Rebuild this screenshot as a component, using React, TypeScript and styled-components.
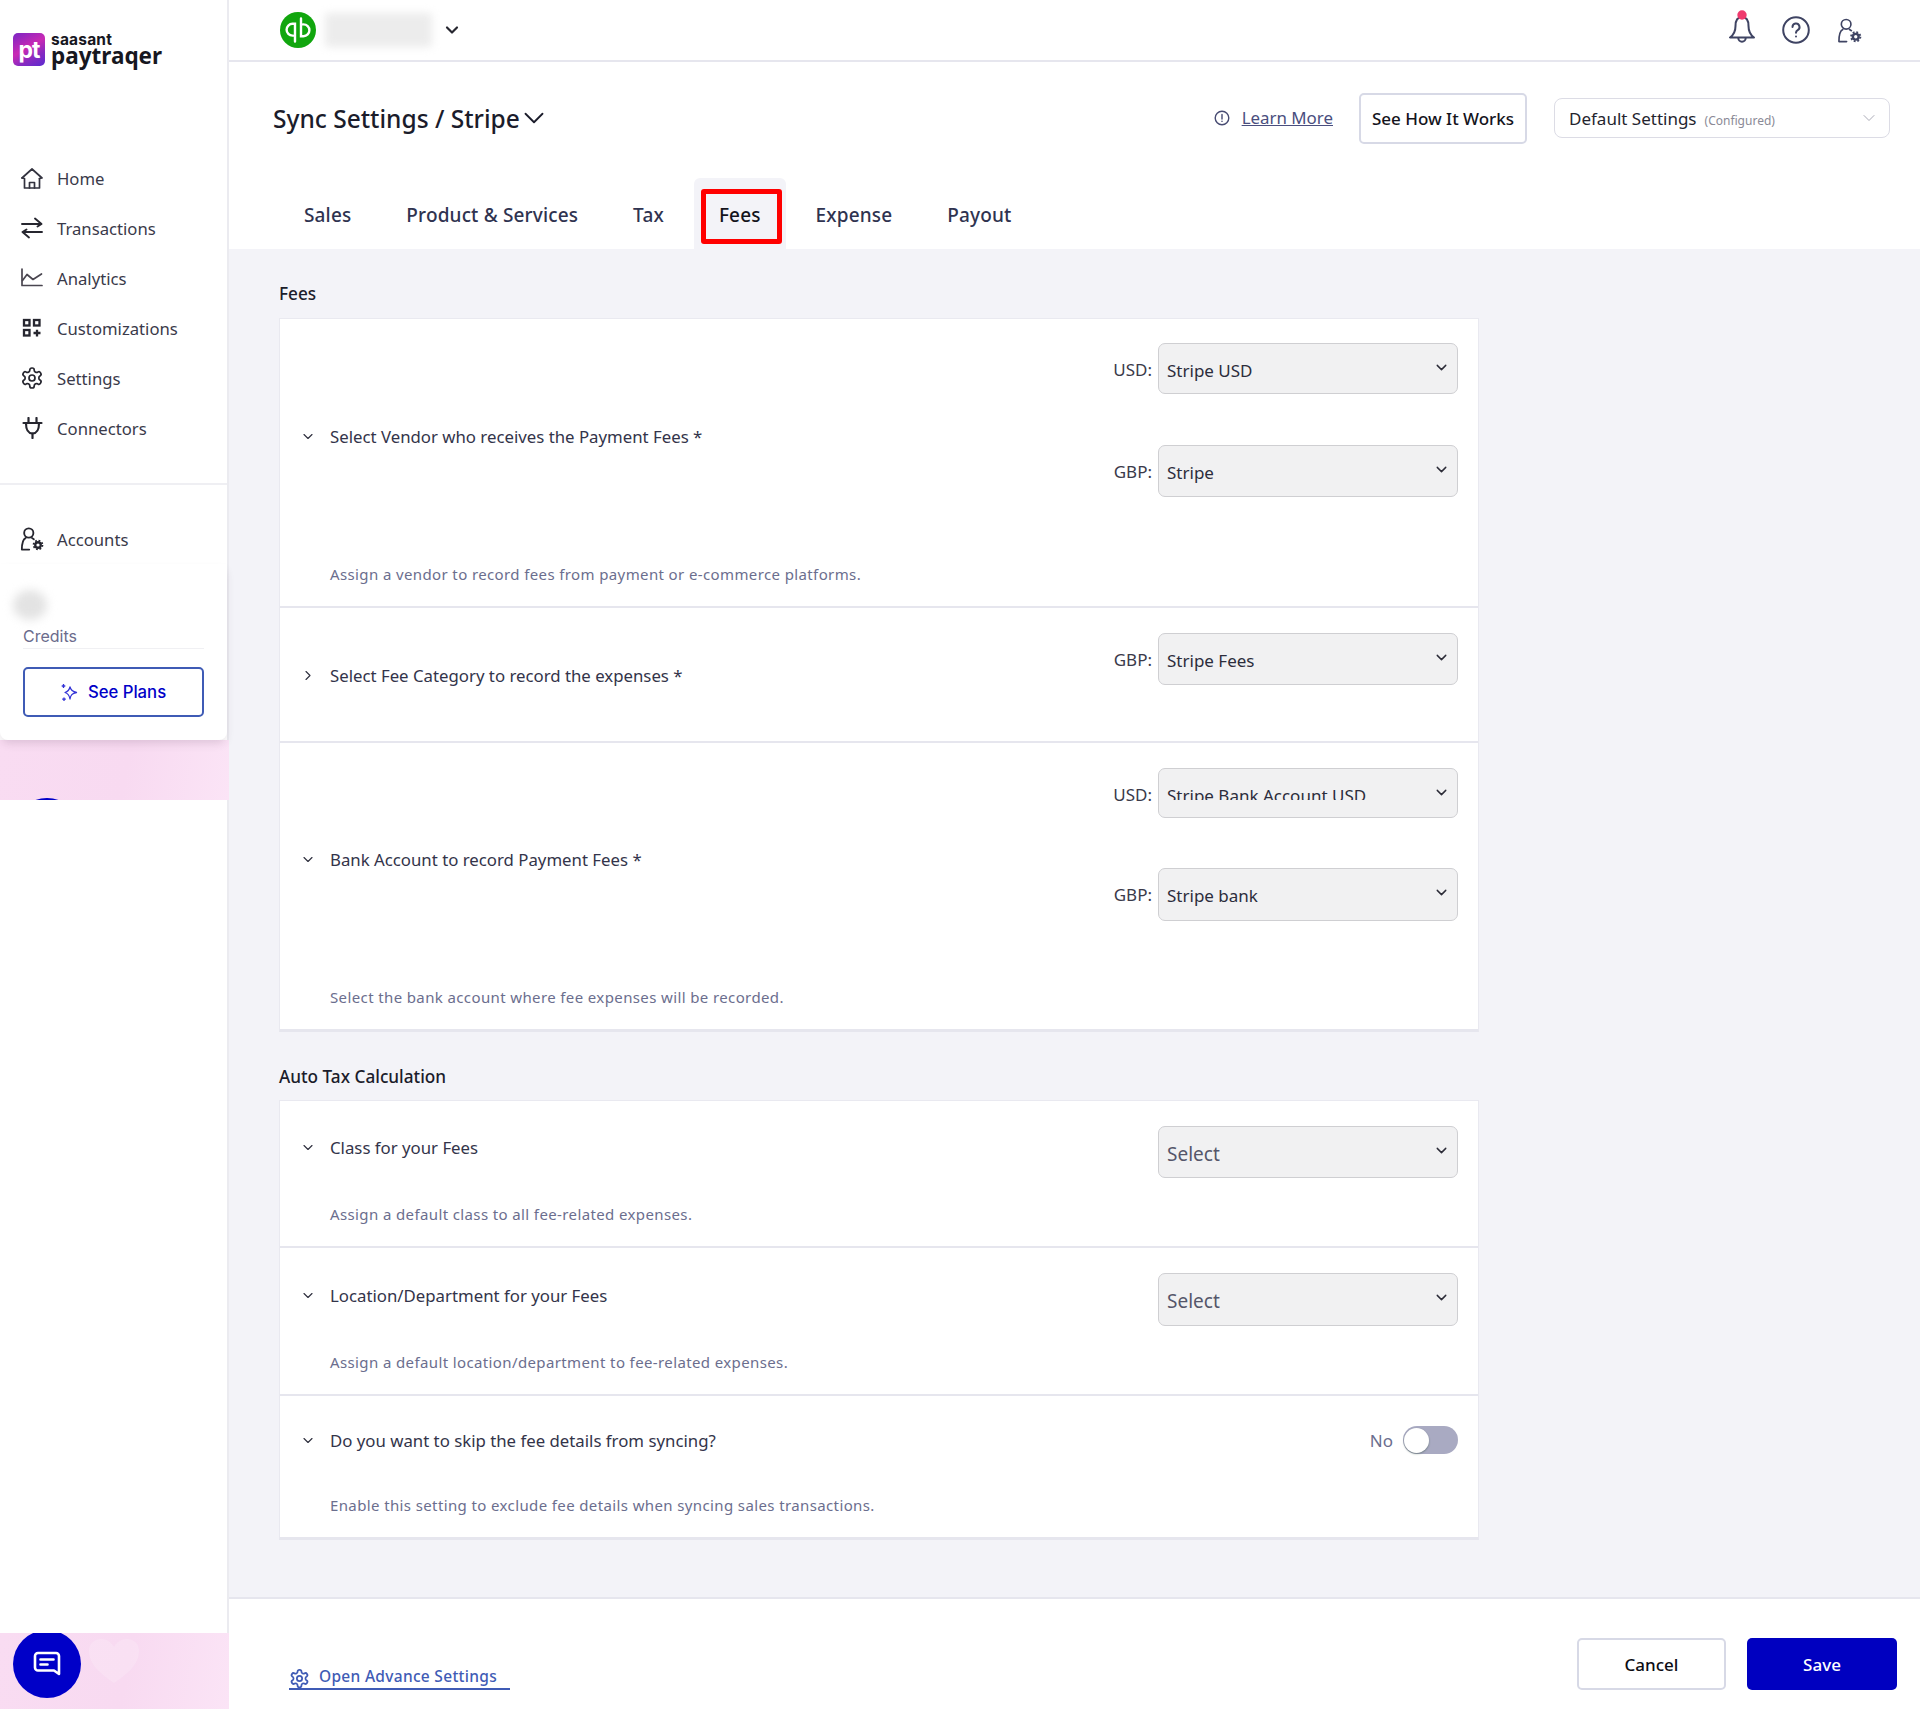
import React, {FC} from 'react';

import styled, {createGlobalStyle} from 'styled-components';
import {ChevronDown, ChevronRight} from 'lucide-react';

const GlobalStyle = createGlobalStyle`
    html, body {
        margin: 0;
        padding: 0;
        background: #fff;
    }
    body {
        font-family: "Noto Sans", "Open Sans", sans-serif;
        color: #33344a;
    }
    * {
        box-sizing: border-box;
    }
`;

const ink = '#3f4463';

const HomeIcon = () => (
    <svg width='22' height='21' viewBox='0 0 22 21' fill='none' stroke='#33333f' strokeWidth='1.7' strokeLinejoin='round' strokeLinecap='round'>
        <path d='M1 10 11 1l10 9-2.500.5'/>
        <path d='M1 10l2.500.5V20h15v-9.500'/>
        <path d='M8.500 20v-5.500h5V20'/>
    </svg>
);

const TransferIcon = () => (
    <svg width='22' height='22' viewBox='0 0 22 22' fill='none' stroke='#26262f' strokeWidth='1.9' strokeLinecap='round' strokeLinejoin='round'>
        <path d='M1 7h19.500M14 1.500 20.500 7l-4 2.500'/>
        <path d='M21 15H1.500M8 20.500 1.500 15l4-2.500'/>
    </svg>
);

const AnalyticsIcon = () => (
    <svg width='22' height='20' viewBox='0 0 22 20' fill='none' stroke='#4a4650' strokeWidth='1.7' strokeLinecap='round' strokeLinejoin='round'>
        <path d='M1 1v16.500h20'/>
        <path d='M1.500 12.500 6 6.500l6 5 8.500-5.500'/>
    </svg>
);

const WidgetsIcon = () => (
    <svg width='20' height='20' viewBox='0 0 20 20' fill='none' stroke='#26262f' strokeWidth='2.300'>
        <rect x='2' y='2' width='5.500' height='5.500'/>
        <rect x='12' y='2' width='5.500' height='5.500'/>
        <rect x='2' y='12' width='5.500' height='5.500'/>
        <path d='M11.500 15h7M15 11.800v6.600'/>
    </svg>
);

const GearIcon: FC<{size: number; color: string; width?: number}> = ({size, color, width = 1.5}) => (
    <svg width={size} height={size} viewBox='0 0 24 24' fill='none' stroke={color} strokeWidth={width} strokeLinecap='round' strokeLinejoin='round'>
        <path d='M12.220 2h-.44a2 2 0 0 0-2 2v.18a2 2 0 0 1-1 1.730l-.43.25a2 2 0 0 1-2 0l-.15-.08a2 2 0 0 0-2.730.73l-.22.38a2 2 0 0 0 .73 2.730l.15.1a2 2 0 0 1 1 1.720v.51a2 2 0 0 1-1 1.740l-.15.09a2 2 0 0 0-.73 2.730l.22.38a2 2 0 0 0 2.730.73l.15-.08a2 2 0 0 1 2 0l.43.25a2 2 0 0 1 1 1.730V20a2 2 0 0 0 2 2h.44a2 2 0 0 0 2-2v-.18a2 2 0 0 1 1-1.730l.43-.25a2 2 0 0 1 2 0l.15.08a2 2 0 0 0 2.730-.73l.22-.39a2 2 0 0 0-.73-2.730l-.15-.08a2 2 0 0 1-1-1.740v-.5a2 2 0 0 1 1-1.740l.15-.09a2 2 0 0 0 .73-2.730l-.22-.38a2 2 0 0 0-2.730-.73l-.15.08a2 2 0 0 1-2 0l-.43-.25a2 2 0 0 1-1-1.730V4a2 2 0 0 0-2-2z'/>
        <circle cx='12' cy='12' r='3'/>
    </svg>
);

const PlugIcon = () => (
    <svg width='21' height='22' viewBox='0 0 21 22' fill='none' stroke='#26262f' strokeWidth='2.200' strokeLinecap='round' strokeLinejoin='round'>
        <path d='M6.500 1v4.500M14.500 1v4.500'/>
        <path d='M1.500 6h18'/>
        <path d='M4 6c0 5 .5 10 6.500 10.500C16.500 16 17 11 17 6'/>
        <path d='M10.500 16.500V21'/>
    </svg>
);

const UserGearIcon: FC<{size: number; color: string; width?: number}> = ({size, color, width = 2}) => (
    <svg width={size} height={size} viewBox='0 0 26 26' fill='none' stroke={color} strokeWidth={width} strokeLinecap='round' strokeLinejoin='round'>
        <circle cx='9.500' cy='6.500' r='5'/>
        <path d='M6 12C3 13.500 2 17 2 24.500h8'/>
        <path d='M13 12l2 1.200'/>
        <g strokeLinecap='butt'>
            <circle cx='19.500' cy='19.500' r='4.800' strokeWidth='2' strokeDasharray='1.900 1.870'/>
            <circle cx='19.500' cy='19.500' r='3' strokeWidth='2.500'/>
        </g>
    </svg>
);

const SparkleIcon = () => (
    <svg width='17' height='19' viewBox='0 0 17 19' fill='none' stroke='#3333d6' strokeWidth='1.300' strokeLinejoin='round'>
        <path d='M9 4c.7 3 2 4.500 6.500 5.500C11 10.500 9.700 12 9 16c-.7-4-2-5.500-5-6.500C7 8.500 8.300 7 9 4z'/>
        <path d='M2.500 1v4M.7 3h3.600M3 14.500V18M1.200 16.200h3.600'/>
    </svg>
);

const QbLogo = () => (
    <svg width='36' height='36' viewBox='0 0 36 36' fill='none'>
        <circle cx='18' cy='18' r='18' fill='#11a60e'/>
        <g stroke='#fff' strokeWidth='2.400' strokeLinecap='round'>
            <path d='M15 29.500V11.800h-2.500a5.900 5.900 0 0 0 0 11.800h.5'/>
            <path d='M21 6.500v17.700h2.500a5.900 5.900 0 0 0 0-11.800H23'/>
        </g>
    </svg>
);

const BellIcon = () => (
    <svg width='26' height='36' viewBox='0 0 26 36' fill='none' stroke={ink} strokeWidth='2' strokeLinecap='round' strokeLinejoin='round'>
        <path d='M13 7c-5 0-6.500 4-6.500 9 0 6-2 9-5.500 11.500h24C21.500 25 19.500 22 19.500 16c0-5-1.500-9-6.500-9z'/>
        <path d='M9.300 28a3.700 3.700 0 0 0 7.400 0'/>
        <circle cx='13' cy='5' r='4.700' fill='#ef3a6e' stroke='none'/>
    </svg>
);

const HelpIcon = () => (
    <svg width='28' height='28' viewBox='0 0 28 28' fill='none' stroke={ink} strokeWidth='2' strokeLinecap='round'>
        <circle cx='14' cy='14' r='12.800'/>
        <path d='M10.500 11a3.500 3.500 0 1 1 5.200 3.100c-1.100.7-1.700 1.300-1.700 2.700'/>
        <path d='M14 20.500v.1'/>
    </svg>
);

const InfoIcon = () => (
    <svg width='16' height='16' viewBox='0 0 16 16' fill='none' stroke='#474b72' strokeWidth='1.400' strokeLinecap='round'>
        <circle cx='8' cy='8' r='6.800'/>
        <path d='M8 4.500V9M8 11.300v.1'/>
    </svg>
);

const ChatIcon = () => (
    <svg width='28' height='26' viewBox='0 0 28 26' fill='none' stroke='#fff' strokeWidth='2.600' strokeLinecap='round' strokeLinejoin='round'>
        <path d='M5 2h18a3 3 0 0 1 3 3v18l-5-3.500H5a3 3 0 0 1-3-3V5a3 3 0 0 1 3-3z'/>
        <path d='M7.500 8.500h13M7.500 13.500h7'/>
    </svg>
);

const HeartShape = () => (
    <svg width='52' height='46' viewBox='0 0 52 46'>
        <path d='M26 45C10 34 1 25 1 13 1 5 7 1 13 1c6 0 10 3 13 8 3-5 7-8 13-8 6 0 12 4 12 12 0 12-9 21-25 32z' fill='#fff' opacity='0.18'/>
    </svg>
);

const navItems = [
    {label: 'Home', icon: <HomeIcon/>},
    {label: 'Transactions', icon: <TransferIcon/>},
    {label: 'Analytics', icon: <AnalyticsIcon/>},
    {label: 'Customizations', icon: <WidgetsIcon/>},
    {label: 'Settings', icon: <GearIcon size={24} color='#26262f' width={1.7}/>},
    {label: 'Connectors', icon: <PlugIcon/>},
];

const tabs = ['Sales', 'Product & Services', 'Tax', 'Fees', 'Expense', 'Payout'];

interface SelectData {
    label?: string;
    value: string;
    height: number;
    clipped?: boolean;
    placeholder?: boolean;
}

interface RowData {
    title: string;
    hint?: string;
    height: number;
    titleTop: number;
    hintGap?: number;
    selectTop: number;
    selectGap?: number;
    collapsed?: boolean;
    selects?: SelectData[];
    toggle?: boolean;
}

const feeRows: RowData[] = [
    {
        title: 'Select Vendor who receives the Payment Fees *',
        hint: 'Assign a vendor to record fees from payment or e-commerce platforms.',
        height: 289,
        titleTop: 106,
        hintGap: 115,
        selectTop: 24,
        selectGap: 51,
        selects: [
            {label: 'USD:', value: 'Stripe USD', height: 51},
            {label: 'GBP:', value: 'Stripe', height: 52},
        ],
    },
    {
        title: 'Select Fee Category to record the expenses *',
        height: 135,
        titleTop: 56,
        selectTop: 25,
        collapsed: true,
        selects: [{label: 'GBP:', value: 'Stripe Fees', height: 52}],
    },
    {
        title: 'Bank Account to record Payment Fees *',
        hint: 'Select the bank account where fee expenses will be recorded.',
        height: 286,
        titleTop: 105,
        hintGap: 115,
        selectTop: 25,
        selectGap: 50,
        selects: [
            {label: 'USD:', value: 'Stripe Bank Account USD', height: 50, clipped: true},
            {label: 'GBP:', value: 'Stripe bank', height: 53},
        ],
    },
];

const taxRows: RowData[] = [
    {
        title: 'Class for your Fees',
        hint: 'Assign a default class to all fee-related expenses.',
        height: 147,
        titleTop: 35,
        hintGap: 44,
        selectTop: 25,
        selects: [{value: 'Select', height: 52, placeholder: true}],
    },
    {
        title: 'Location/Department for your Fees',
        hint: 'Assign a default location/department to fee-related expenses.',
        height: 148,
        titleTop: 36,
        hintGap: 44,
        selectTop: 25,
        selects: [{value: 'Select', height: 53, placeholder: true}],
    },
    {
        title: 'Do you want to skip the fee details from syncing?',
        hint: 'Enable this setting to exclude fee details when syncing sales transactions.',
        height: 141,
        titleTop: 33,
        hintGap: 42,
        selectTop: 30,
        toggle: true,
    },
];

const SettingRow: FC<{row: RowData}> = ({row}) => (
    <Row $height={row.height}>
        <RowLeft $top={row.titleTop}>
            <RowTitle>
                <RowChevron>
                    {row.collapsed ? <ChevronRight size={23} strokeWidth={1.700}/> : <ChevronDown size={23} strokeWidth={1.700}/>}
                </RowChevron>
                {row.title}
            </RowTitle>
            {row.hint && <RowHint $gap={row.hintGap}>{row.hint}</RowHint>}
        </RowLeft>
        <RowControls $top={row.selectTop} $gap={row.selectGap}>
            {row.selects?.map((select) => (
                <SelectLine key={select.value}>
                    {select.label && <SelectLabel $clipped={select.clipped}>{select.label}</SelectLabel>}
                    <SelectBox $height={select.height}>
                        <SelectValue $clipped={select.clipped} $placeholder={select.placeholder}>{select.value}</SelectValue>
                        <ChevronDown size={17} strokeWidth={2} color='#2c2c38'/>
                    </SelectBox>
                </SelectLine>
            ))}
            {row.toggle && (
                <ToggleLine>
                    <ToggleLabel>{'No'}</ToggleLabel>
                    <ToggleTrack><ToggleKnob/></ToggleTrack>
                </ToggleLine>
            )}
        </RowControls>
    </Row>
);

const App: FC = () => {
    return (
        <Page>
            <GlobalStyle/>
            <Sidebar>
                <Brand>
                    <BrandMark>{'pt'}</BrandMark>
                    <BrandText>
                        <BrandCompany>{'saasant'}</BrandCompany>
                        <BrandProduct>{'paytraqer'}</BrandProduct>
                    </BrandText>
                </Brand>
                <Nav>
                    {navItems.map((item) => (
                        <NavItem key={item.label}>
                            <NavIcon>{item.icon}</NavIcon>
                            {item.label}
                        </NavItem>
                    ))}
                </Nav>
                <NavDivider/>
                <NavItem>
                    <NavIcon><UserGearIcon size={26} color='#26262f'/></NavIcon>
                    {'Accounts'}
                </NavItem>
                <CreditCard>
                    <BlurredCount/>
                    <CreditsLabel>{'Credits'}</CreditsLabel>
                    <PlansButton>
                        <SparkleIcon/>
                        {'See Plans'}
                    </PlansButton>
                </CreditCard>
                <PinkStrip $height={60}>
                    <ChatBubble $top={58}/>
                </PinkStrip>
                <SidebarGap/>
                <PinkStrip $height={76}>
                    <ChatBubble $top={-3}><ChatIcon/></ChatBubble>
                    <HeartSpot><HeartShape/></HeartSpot>
                </PinkStrip>
            </Sidebar>
            <Main>
                <TopBar>
                    <TopBarLeft>
                        <QbLogo/>
                        <BlurredCompany/>
                        <ChevronDown size={20} strokeWidth={2.600} color='#26262f'/>
                    </TopBarLeft>
                    <TopBarRight>
                        <BellIcon/>
                        <HelpIcon/>
                        <UserGearIcon size={25} color={ink} width={1.700}/>
                    </TopBarRight>
                </TopBar>
                <PageHeader>
                    <TitleRow>
                        <PageTitle>
                            {'Sync Settings / Stripe'}
                            <TitleChevron><ChevronDown size={34} strokeWidth={1.300}/></TitleChevron>
                        </PageTitle>
                        <TitleActions>
                            <LearnMore>
                                <InfoIcon/>
                                <LearnMoreLink>{'Learn More'}</LearnMoreLink>
                            </LearnMore>
                            <HowItWorks>{'See How It Works'}</HowItWorks>
                            <ConfigSelect>
                                <span>
                                    {'Default Settings'}
                                    <ConfigNote>{'(Configured)'}</ConfigNote>
                                </span>
                                <ChevronDown size={20} strokeWidth={1} color='#9a9aa8'/>
                            </ConfigSelect>
                        </TitleActions>
                    </TitleRow>
                    <TabBar>
                        {tabs.map((tab) => (
                            <Tab key={tab} $active={tab === 'Fees'}>
                                {tab}
                                {tab === 'Fees' && <TabHighlight/>}
                            </Tab>
                        ))}
                    </TabBar>
                </PageHeader>
                <Body>
                    <SectionHeading $top={33} $bottom={12}>{'Fees'}</SectionHeading>
                    <Card>
                        {feeRows.map((row) => <SettingRow key={row.title} row={row}/>)}
                    </Card>
                    <SectionHeading $top={33} $bottom={11}>{'Auto Tax Calculation'}</SectionHeading>
                    <Card>
                        {taxRows.map((row) => <SettingRow key={row.title} row={row}/>)}
                    </Card>
                </Body>
                <Footer>
                    <AdvanceLink>
                        <AdvanceIcon><GearIcon size={21} color='#3f5bb5' width={2}/></AdvanceIcon>
                        {'Open Advance Settings'}
                    </AdvanceLink>
                    <FooterButtons>
                        <CancelButton>{'Cancel'}</CancelButton>
                        <SaveButton>{'Save'}</SaveButton>
                    </FooterButtons>
                </Footer>
            </Main>
        </Page>
    );
};

const Page = styled.div`
    display: grid;
    grid-template-columns: 229px 1fr;
    width: 1920px;
    height: 1709px;
    overflow: hidden;
`;

const Sidebar = styled.aside`
    display: flex;
    flex-direction: column;
    height: 100%;
    border-right: 2px solid #ebebf0;
`;

const Brand = styled.div`
    display: flex;
    align-items: flex-start;
    gap: 6px;
    height: 153px;
    padding: 33px 0 0 13px;
`;

const BrandMark = styled.div`
    display: flex;
    align-items: center;
    justify-content: center;
    width: 32px;
    height: 33px;
    border-radius: 5px;
    background: linear-gradient(150deg, #7a26c4 0%, #c92ab4 45%, #8a2ac0 70%, #5a2bd0 100%);
    color: #fff;
    font-family: Inter, sans-serif;
    font-size: 23px;
    font-weight: 700;
    letter-spacing: -1px;
`;

const BrandText = styled.div`
    display: flex;
    flex-direction: column;
    margin-top: -1px;
    color: #17171f;
`;

const BrandCompany = styled.span`
    height: 16px;
    font-family: Inter, sans-serif;
    font-size: 15.500px;
    font-weight: 700;
    line-height: 16px;
    letter-spacing: 0.2px;
`;

const BrandProduct = styled.span`
    font-family: "Noto Sans", sans-serif;
    font-size: 22.500px;
    font-weight: 700;
    line-height: 16px;
`;

const Nav = styled.nav`
    display: flex;
    flex-direction: column;
`;

const NavItem = styled.div`
    display: flex;
    align-items: center;
    height: 50px;
    padding-left: 20px;
    font-size: 16.700px;
    color: #3a3a4a;
`;

const NavIcon = styled.span`
    display: flex;
    align-items: center;
    justify-content: center;
    width: 24px;
    height: 24px;
    margin-right: 13px;
`;

const NavDivider = styled.div`
    height: 2px;
    margin: 30px 0 29px;
    background: #efeff3;
`;

const CreditCard = styled.div`
    position: relative;
    z-index: 1;
    display: flex;
    flex-direction: column;
    height: 176px;
    padding: 0 23px;
    border-radius: 0 0 8px 8px;
    background: #fff;
    box-shadow: 0 5px 10px -2px rgba(70, 40, 70, 0.16);
`;

const BlurredCount = styled.div`
    width: 34px;
    height: 30px;
    margin: 26px 0 0 -10px;
    border-radius: 50%;
    background: #e3e3e3;
    filter: blur(5px);
`;

const CreditsLabel = styled.div`
    height: 29px;
    padding-top: 7px;
    border-bottom: 1px solid #f0f0f3;
    font-family: Inter, sans-serif;
    font-size: 16px;
    line-height: 18px;
    color: #6b6b8c;
`;

const PlansButton = styled.button`
    display: flex;
    align-items: center;
    justify-content: center;
    gap: 10px;
    height: 50px;
    margin-top: 18px;
    padding: 0;
    border: 2px solid #3f5bb5;
    border-radius: 5px;
    background: #fff;
    font-family: Inter, sans-serif;
    font-size: 16.700px;
    font-weight: 500;
    color: #0000c8;
`;

const PinkStrip = styled.div<{$height: number}>`
    position: relative;
    flex: none;
    height: ${(props) => props.$height}px;
    margin-right: -2px;
    overflow: hidden;
    background: linear-gradient(100deg, #f9dcf2 0%, #f8daf1 55%, #fbe4f6 100%);
`;

const ChatBubble = styled.div<{$top: number}>`
    position: absolute;
    top: ${(props) => props.$top}px;
    left: 13px;
    display: flex;
    align-items: center;
    justify-content: center;
    width: 68px;
    height: 68px;
    border-radius: 50%;
    background: #0000c8;
`;

const HeartSpot = styled.div`
    position: absolute;
    top: 5px;
    left: 88px;
`;

const SidebarGap = styled.div`
    flex: 1;
`;

const Main = styled.main`
    display: flex;
    flex-direction: column;
    min-width: 0;
    height: 100%;
`;

const TopBar = styled.header`
    display: flex;
    flex: none;
    align-items: center;
    justify-content: space-between;
    height: 62px;
    padding: 0 58px 0 51px;
    border-bottom: 2px solid #e6e6ee;
`;

const TopBarLeft = styled.div`
    display: flex;
    align-items: center;
`;

const BlurredCompany = styled.div`
    width: 107px;
    height: 34px;
    margin: 0 10px 0 9px;
    border-radius: 3px;
    background: #ececec;
    filter: blur(4px);
`;

const TopBarRight = styled.div`
    display: flex;
    align-items: center;
    gap: 27px;

    svg:first-child {
        margin-left: 3px;
        margin-bottom: 4px;
    }
`;

const PageHeader = styled.div`
    display: flex;
    flex: none;
    flex-direction: column;
    height: 187px;
`;

const TitleRow = styled.div`
    display: flex;
    align-items: center;
    justify-content: space-between;
    height: 112px;
    margin-bottom: 4px;
    padding: 0 30px 0 44px;
`;

const PageTitle = styled.h1`
    display: flex;
    align-items: center;
    margin: 0;
    font-size: 24.500px;
    font-weight: 500;
    color: #1b1c2b;
`;

const TitleChevron = styled.span`
    display: flex;
    margin-left: -3px;
`;

const TitleActions = styled.div`
    display: flex;
    align-items: center;
`;

const LearnMore = styled.div`
    display: flex;
    align-items: center;
    gap: 12px;
    margin-right: 26px;
`;

const LearnMoreLink = styled.a`
    margin-top: -2px;
    font-size: 16.900px;
    color: #4a4e7e;
    text-decoration: underline;
`;

const HowItWorks = styled.button`
    width: 168px;
    height: 51px;
    padding: 0;
    border: 2px solid #d7d9e6;
    border-radius: 5px;
    background: #fff;
    font-family: inherit;
    font-size: 17px;
    font-weight: 500;
    color: #14141c;
`;

const ConfigSelect = styled.div`
    display: flex;
    align-items: center;
    justify-content: space-between;
    width: 336px;
    height: 40px;
    margin-left: 27px;
    padding: 0 10px 0 14px;
    border: 1px solid #dcdce5;
    border-radius: 8px;
    font-size: 17px;
    color: #24242e;
`;

const ConfigNote = styled.span`
    margin-left: 8px;
    font-size: 12px;
    color: #8a8a96;
`;

const TabBar = styled.div`
    display: flex;
    gap: 5px;
    height: 71px;
    padding-left: 50px;
`;

const Tab = styled.div<{$active?: boolean}>`
    position: relative;
    display: flex;
    align-items: center;
    padding: 2px 25px 0;
    border-radius: 6px 6px 0 0;
    background: ${(props) => (props.$active ? '#f3f3f8' : 'transparent')};
    font-size: 19px;
    font-weight: 500;
    letter-spacing: 0.15px;
    color: ${(props) => (props.$active ? '#14141c' : '#2f3350')};
`;

const TabHighlight = styled.span`
    position: absolute;
    top: 11px;
    right: 4px;
    bottom: 5px;
    left: 7px;
    border: 5px solid #f00;
    border-radius: 3px;
`;

const Body = styled.div`
    flex: 1;
    padding: 0 441px 0 50px;
    background: #f3f3f8;
`;

const SectionHeading = styled.h2<{$top: number; $bottom: number}>`
    margin: ${(props) => props.$top}px 0 ${(props) => props.$bottom}px;
    font-size: 17.200px;
    font-weight: 500;
    line-height: 24px;
    color: #1b1c2b;
`;

const Card = styled.section`
    border: 1px solid #e9e9f0;
    border-bottom-width: 3px;
    border-bottom-color: #e6e6ee;
    background: #fff;
`;

const Row = styled.div<{$height: number}>`
    display: flex;
    justify-content: space-between;
    height: ${(props) => props.$height}px;
    padding: 0 20px;
    border-bottom: 2px solid #e6e6ee;

    &:last-child {
        border-bottom: 0;
    }
`;

const RowLeft = styled.div<{$top: number}>`
    display: flex;
    flex-direction: column;
    padding-top: ${(props) => props.$top}px;
`;

const RowTitle = styled.div`
    display: flex;
    align-items: center;
    font-size: 16.800px;
    line-height: 24px;
    color: #33344a;
`;

const RowChevron = styled.span`
    display: flex;
    align-items: center;
    justify-content: center;
    width: 16px;
    margin-right: 14px;
    margin-top: -2px;
    color: #2c2d3c;
`;

const RowHint = styled.div<{$gap?: number}>`
    margin-top: ${(props) => props.$gap}px;
    padding-left: 30px;
    font-size: 15px;
    line-height: 20px;
    letter-spacing: 0.38px;
    color: #6b6e8e;
`;

const RowControls = styled.div<{$top: number; $gap?: number}>`
    display: flex;
    flex-direction: column;
    gap: ${(props) => props.$gap ?? 0}px;
    padding-top: ${(props) => props.$top}px;
`;

const SelectLine = styled.div`
    display: flex;
    align-items: flex-start;
    justify-content: flex-end;
`;

const SelectLabel = styled.span<{$clipped?: boolean}>`
    height: ${(props) => (props.$clipped ? '33px' : 'auto')};
    margin-right: 6px;
    overflow: hidden;
    padding-top: 15px;
    font-size: 17px;
    line-height: 24px;
    color: #3a3a4a;
`;

const SelectBox = styled.div<{$height: number}>`
    display: flex;
    align-items: flex-start;
    justify-content: space-between;
    width: 300px;
    height: ${(props) => props.$height}px;
    padding: 15px 7px 0 8px;
    border: 1.500px solid #cfcfd2;
    border-radius: 7px;
    background: #f1f1f2;
`;

const SelectValue = styled.span<{$clipped?: boolean; $placeholder?: boolean}>`
    display: block;
    height: ${(props) => (props.$clipped ? '16px' : 'auto')};
    overflow: hidden;
    font-size: ${(props) => (props.$placeholder ? '19px' : '17px')};
    line-height: 24px;
    color: ${(props) => (props.$placeholder ? '#55566a' : '#2c2d3c')};
`;

const ToggleLine = styled.div`
    display: flex;
    align-items: center;
    gap: 10px;
`;

const ToggleLabel = styled.span`
    font-size: 17px;
    color: #6b6e8e;
`;

const ToggleTrack = styled.span`
    display: flex;
    align-items: center;
    width: 55px;
    height: 28px;
    padding: 0 0 0 1px;
    border-radius: 14px;
    background: #a9aac2;
`;

const ToggleKnob = styled.span`
    width: 25px;
    height: 25px;
    border-radius: 50%;
    background: #fff;
    box-shadow: 0 1px 2px rgba(30, 60, 40, 0.4);
`;

const Footer = styled.footer`
    display: flex;
    flex: none;
    justify-content: space-between;
    height: 112px;
    padding: 39px 23px 0 60px;
    border-top: 2px solid #e6e6ee;
`;

const AdvanceLink = styled.a`
    display: flex;
    align-items: center;
    gap: 9px;
    height: 38px;
    margin-top: 14px;
    padding-right: 13px;
    padding-top: 11px;
    border-bottom: 2px solid #3f5bb5;
    font-size: 15.500px;
    font-weight: 500;
    color: #3f5bb5;
    letter-spacing: 0.3px;
`;

const AdvanceIcon = styled.span`
    display: flex;
    margin-top: 5px;
`;

const FooterButtons = styled.div`
    display: flex;
    gap: 21px;
`;

const CancelButton = styled.button`
    width: 149px;
    height: 52px;
    padding: 0;
    border: 2px solid #d7d9e6;
    border-radius: 5px;
    background: #fff;
    font-family: inherit;
    font-size: 17px;
    font-weight: 500;
    color: #0c0c14;
`;

const SaveButton = styled(CancelButton)`
    width: 150px;
    border: 0;
    background: #0000c0;
    color: #fff;
`;

export default App;
